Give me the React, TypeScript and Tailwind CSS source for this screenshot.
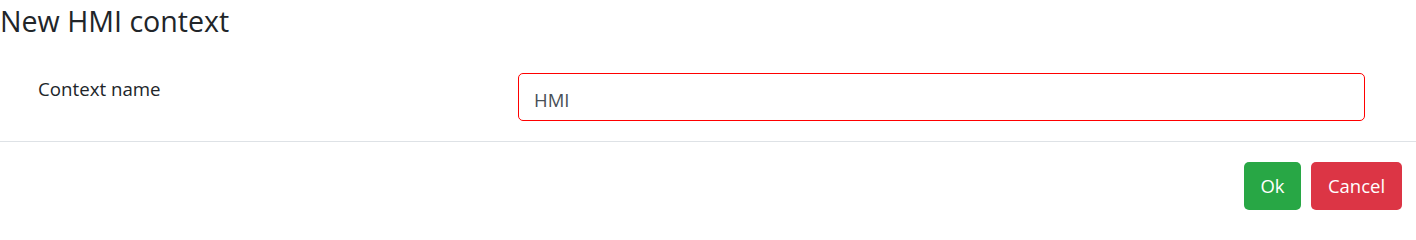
export default function App() {
  return (
    <div className="w-[1416px] h-[225px] bg-white text-[#212529] font-['Segoe_UI','Open_Sans',sans-serif] overflow-hidden">
      <h3 className="mt-[4px] text-[28.6px] leading-[34px] font-normal">New HMI context</h3>

      <div className="mt-[35px] flex items-start">
        <label htmlFor="ctx" className="w-[518px] pl-[38px] pt-px text-[18.7px] leading-[30px]">
          Context name
        </label>
        <input
          id="ctx"
          defaultValue="HMI"
          className="box-border w-[847px] h-12 pl-[15px] pr-4 pt-[4px] pb-0 border border-[#ff0000] rounded-[5px] text-[18.5px] text-[#495057] outline-none bg-white"
        />
      </div>

      <div className="mt-5 border-t border-[#dee2e6]" />

      <div className="pt-5 pr-[14px] flex justify-end gap-[10px]">
        <button className="w-[57px] h-12 rounded-[5px] bg-[#28a745] text-white text-[18.5px]">Ok</button>
        <button className="w-[91px] h-12 rounded-[5px] bg-[#dc3545] text-white text-[18.5px]">Cancel</button>
      </div>
    </div>
  );
}
